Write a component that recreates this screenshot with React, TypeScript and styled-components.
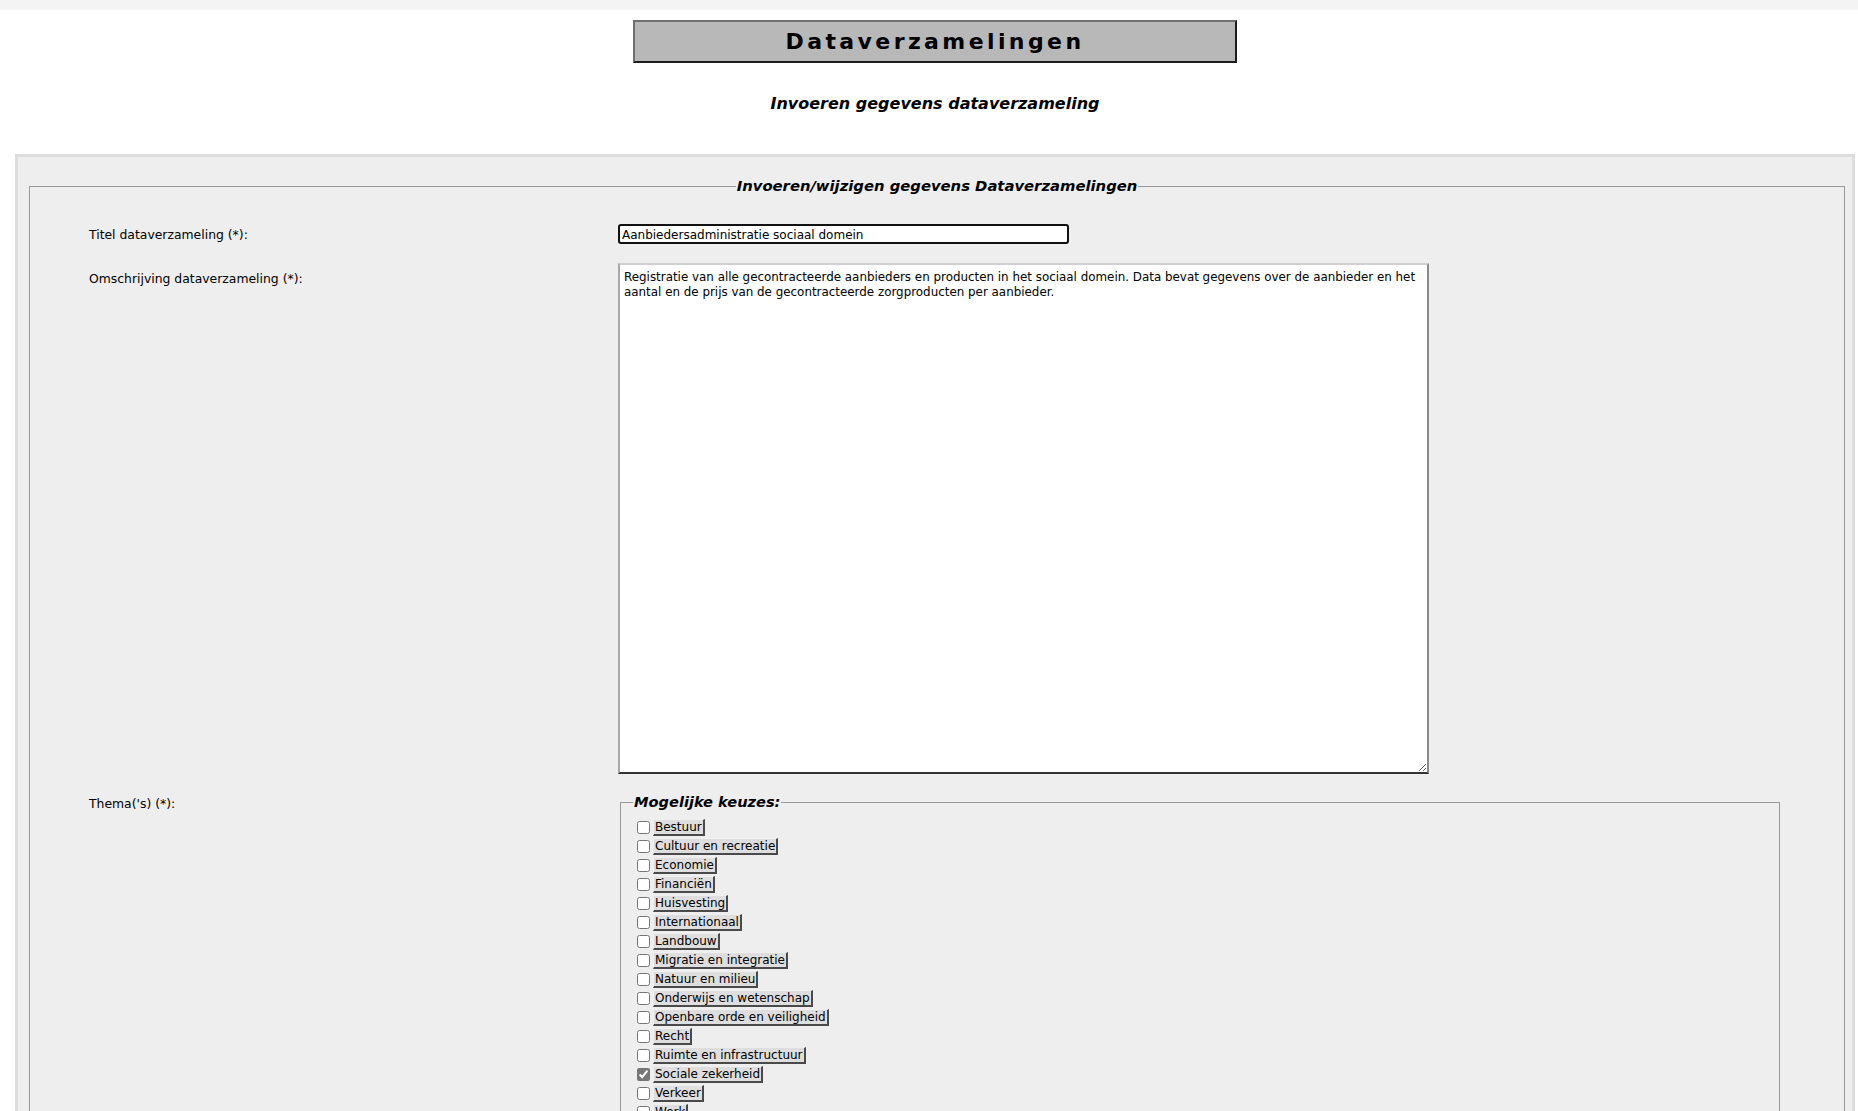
import * as React from "react";
import styled, { createGlobalStyle } from "styled-components";

const themes = [
  "Bestuur",
  "Cultuur en recreatie",
  "Economie",
  "Financiën",
  "Huisvesting",
  "Internationaal",
  "Landbouw",
  "Migratie en integratie",
  "Natuur en milieu",
  "Onderwijs en wetenschap",
  "Openbare orde en veiligheid",
  "Recht",
  "Ruimte en infrastructuur",
  "Sociale zekerheid",
  "Verkeer",
  "Werk",
  "Zorg en gezondheid"
];

const GlobalStyle = createGlobalStyle`
  body {
    margin: 0;
    background: #fff;
    color: #000;
    font-family: "DejaVu Sans", Verdana, sans-serif;
    font-size: 12px;
  }
`;

const TopBar = styled.div`
  height: 10px;
  background-color: #f4f4f4;
`;

const Page = styled.div`
  margin: 0 3px 0 15px;
`;

const Header = styled.h1`
  box-sizing: border-box;
  width: 604px;
  height: 43px;
  margin: 10px auto 0;
  display: flex;
  align-items: center;
  justify-content: center;
  background-color: #b8b8b8;
  border-style: solid;
  border-width: 2px;
  border-color: #707070 #1c1c1c #1c1c1c #707070;
  font-size: 22px;
  font-weight: 700;
  letter-spacing: 3.4px;
`;

const SubTitle = styled.h2`
  margin: 32px 0 0;
  text-align: center;
  font-size: 16px;
  line-height: 18px;
  font-weight: 700;
  font-style: italic;
`;

const Panel = styled.div`
  margin-top: 41px;
  border: 3px solid #dddddd;
  border-bottom: none;
  background-color: #eeeeee;
  padding: 20px 7px 40px 11px;
`;

const FieldSet = styled.fieldset`
  margin: 0;
  border: 1px solid #999;
  padding: 29px 0 20px 0;
`;

const MainLegend = styled.legend`
  margin: 0 auto;
  padding: 0 1px;
  font-size: 14.8px;
  line-height: 18px;
  font-weight: 700;
  font-style: italic;
`;

const FormGrid = styled.div`
  display: grid;
  grid-template-columns: 529px 1fr;
  row-gap: 19px;
  align-items: start;
  padding-left: 59px;
`;

interface ILabelProps {
  $pad: number;
}

const Label = styled.label<ILabelProps>`
  padding-top: ${props => props.$pad}px;
  font-size: 12.4px;
  line-height: 14px;
`;

const TextInput = styled.input`
  box-sizing: border-box;
  width: 451px;
  height: 20px;
  margin: 0;
  padding: 1px 2px 0;
  border: 2px solid #111;
  border-radius: 3px;
  background: #fff;
  font-family: "DejaVu Sans", Verdana, sans-serif;
  font-size: 12px;
  color: #000;
  outline: none;
`;

const TextArea = styled.textarea`
  box-sizing: border-box;
  display: block;
  width: 811px;
  height: 511px;
  margin: 0;
  padding: 5px 4px 3px;
  border-style: solid;
  border-width: 2px;
  border-color: #cfcfcf #8a8a8a #333 #a8a8a8;
  background: #fff;
  font-family: "DejaVu Sans", Verdana, sans-serif;
  font-size: 11.9px;
  line-height: 15px;
  color: #000;
  outline: none;
`;

const ChoiceSet = styled.fieldset`
  box-sizing: border-box;
  width: 1160px;
  margin: 0 0 0 2px;
  border: 1px solid #999;
  padding: 7px 12px 10px 12px;
`;

const ChoiceLegend = styled.legend`
  padding: 0 1px;
  font-size: 14.6px;
  line-height: 18px;
  font-weight: 700;
  font-style: italic;
`;

const Option = styled.div`
  display: flex;
  align-items: center;
  height: 19px;
`;

const Check = styled.input`
  width: 13px;
  height: 13px;
  margin: 3px 3px 3px 4px;
  accent-color: #767676;
`;

const OptionLabel = styled.label`
  display: inline-block;
  padding: 0 1px;
  font-size: 12px;
  line-height: 14px;
  background-color: #dedede;
  border-style: solid;
  border-width: 1px 2px 2px 1px;
  border-color: #efefef #4a4a4a #4a4a4a #efefef;
`;

const App = () => {
  const [title, setTitle] = React.useState("Aanbiedersadministratie sociaal domein");
  const [description, setDescription] = React.useState(
    "Registratie van alle gecontracteerde aanbieders en producten in het sociaal domein. Data bevat gegevens over de aanbieder en het aantal en de prijs van de gecontracteerde zorgproducten per aanbieder."
  );
  const [selected, setSelected] = React.useState<string[]>(["Sociale zekerheid"]);

  const toggle = (theme: string) => {
    setSelected(current =>
      current.includes(theme) ? current.filter(t => t !== theme) : [...current, theme]
    );
  };

  return (
    <>
      <GlobalStyle />
      <TopBar />
      <Page>
        <Header>Dataverzamelingen</Header>
        <SubTitle>Invoeren gegevens dataverzameling</SubTitle>
        <Panel>
          <FieldSet>
            <MainLegend>Invoeren/wijzigen gegevens Dataverzamelingen</MainLegend>
            <FormGrid>
              <Label $pad={4} htmlFor="titel">
                Titel dataverzameling (*):
              </Label>
              <TextInput id="titel" value={title} onChange={e => setTitle(e.target.value)} />

              <Label $pad={9} htmlFor="omschrijving">
                Omschrijving dataverzameling (*):
              </Label>
              <TextArea
                id="omschrijving"
                value={description}
                onChange={e => setDescription(e.target.value)}
              />

              <Label $pad={4}>Thema('s) (*):</Label>
              <ChoiceSet>
                <ChoiceLegend>Mogelijke keuzes:</ChoiceLegend>
                {themes.map((theme, i) => (
                  <Option key={theme}>
                    <Check
                      type="checkbox"
                      id={`thema-${i}`}
                      checked={selected.includes(theme)}
                      onChange={() => toggle(theme)}
                    />
                    <OptionLabel htmlFor={`thema-${i}`}>{theme}</OptionLabel>
                  </Option>
                ))}
              </ChoiceSet>
            </FormGrid>
          </FieldSet>
        </Panel>
      </Page>
    </>
  );
};

export default App;
